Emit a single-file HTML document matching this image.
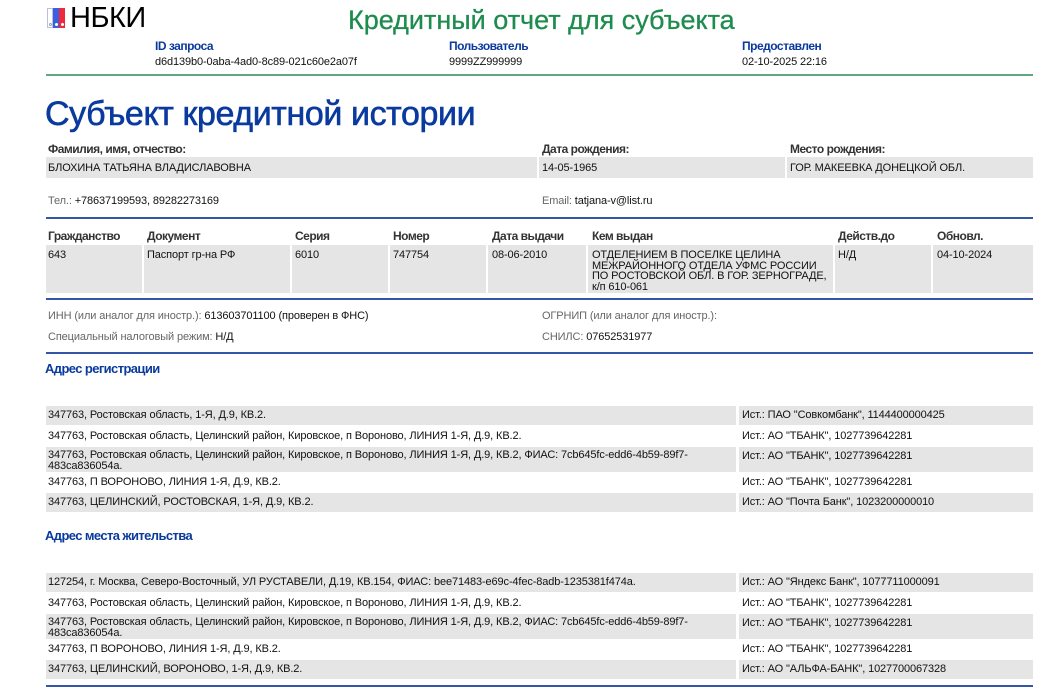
<!DOCTYPE html>
<html><head><meta charset="utf-8"><style>
*{margin:0;padding:0;box-sizing:border-box}
body{width:1059px;height:699px;background:#fff;position:relative;overflow:hidden;font-family:"Liberation Sans",Arial,sans-serif;color:#111}
.a{position:absolute;white-space:nowrap}
.t{font-size:11px;letter-spacing:-0.12px;line-height:11px}
.lb{font-size:12px;font-weight:bold;color:#333;letter-spacing:-0.5px}
.g{position:absolute;background:#e5e5e5}
.gr{color:#666}
.bl{position:absolute;left:46px;width:987px;height:2px;background:#3456a8}
.h2{font-size:13px;font-weight:bold;color:#0a3a9e;letter-spacing:-0.6px}
.ml{font-size:12px;font-weight:bold;color:#0a3a9e;letter-spacing:-0.5px}
</style></head><body>
<div class="a" style="left:47px;top:8px;width:6px;height:20px;border:1px solid #b8c0e0;background:#fff"></div>
<div class="a" style="left:53px;top:8px;width:6px;height:20px;background:#3a5fe0"></div>
<div class="a" style="left:59px;top:8px;width:6px;height:20px;background:#ee2a3a"></div>
<div class="a" style="left:49px;top:23px;width:3px;height:3px;border:1px solid #8aa;border-radius:50%"></div>
<div class="a" style="left:55px;top:23px;width:3px;height:3px;background:#fff;border-radius:50%"></div>
<div class="a" style="left:61px;top:23px;width:3px;height:3px;background:#fff;border-radius:50%"></div>
<div class="a" style="left:70px;top:2px;font-size:29px;color:#000;line-height:32px;letter-spacing:-0.5px">НБКИ</div>
<div class="a" style="left:348px;top:4px;font-size:27px;color:#1e8c4e;line-height:32px;-webkit-text-stroke:0.3px #1e8c4e">Кредитный отчет для субъекта</div>
<div class="a ml" style="left:155px;top:39px">ID запроса</div>
<div class="a t" style="left:155px;top:57px">d6d139b0-0aba-4ad0-8c89-021c60e2a07f</div>
<div class="a ml" style="left:449px;top:39px">Пользователь</div>
<div class="a t" style="left:449px;top:57px">9999ZZ999999</div>
<div class="a ml" style="left:742px;top:39px">Предоставлен</div>
<div class="a t" style="left:742px;top:57px">02-10-2025 22:16</div>
<div class="a" style="left:46px;top:74px;width:987px;height:2px;background:#5fa882"></div>
<div class="a" style="left:45px;top:95px;font-size:34px;color:#0a3a9e;line-height:38px;letter-spacing:-0.4px;-webkit-text-stroke:0.6px #0a3a9e">Субъект кредитной истории</div>
<div class="a lb" style="left:48px;top:142px">Фамилия, имя, отчество:</div>
<div class="a lb" style="left:542px;top:142px">Дата рождения:</div>
<div class="a lb" style="left:790px;top:142px">Место рождения:</div>
<div class="g" style="left:46px;top:157px;width:491px;height:21px"></div>
<div class="g" style="left:539px;top:157px;width:246px;height:21px"></div>
<div class="g" style="left:787px;top:157px;width:246px;height:21px"></div>
<div class="a t" style="left:48px;top:163px">БЛОХИНА ТАТЬЯНА ВЛАДИСЛАВОВНА</div>
<div class="a t" style="left:542px;top:163px">14-05-1965</div>
<div class="a t" style="left:790px;top:163px">ГОР. МАКЕЕВКА ДОНЕЦКОЙ ОБЛ.</div>
<div class="a t" style="left:48px;top:196px"><span class="gr">Тел.:</span> +78637199593, 89282273169</div>
<div class="a t" style="left:542px;top:196px"><span class="gr">Email:</span> tatjana-v@list.ru</div>
<div class="bl" style="top:217px"></div>
<div class="a lb" style="left:48px;top:229px">Гражданство</div>
<div class="a lb" style="left:147px;top:229px">Документ</div>
<div class="a lb" style="left:295px;top:229px">Серия</div>
<div class="a lb" style="left:393px;top:229px">Номер</div>
<div class="a lb" style="left:492px;top:229px">Дата выдачи</div>
<div class="a lb" style="left:592px;top:229px">Кем выдан</div>
<div class="a lb" style="left:838px;top:229px">Действ.до</div>
<div class="a lb" style="left:937px;top:229px">Обновл.</div>
<div class="g" style="left:46px;top:245px;width:96px;height:48px"></div>
<div class="g" style="left:144px;top:245px;width:146px;height:48px"></div>
<div class="g" style="left:292px;top:245px;width:96px;height:48px"></div>
<div class="g" style="left:390px;top:245px;width:96px;height:48px"></div>
<div class="g" style="left:488px;top:245px;width:98px;height:48px"></div>
<div class="g" style="left:588px;top:245px;width:245px;height:48px"></div>
<div class="g" style="left:835px;top:245px;width:96px;height:48px"></div>
<div class="g" style="left:933px;top:245px;width:100px;height:48px"></div>
<div class="a t" style="left:48px;top:250px">643</div>
<div class="a t" style="left:147px;top:250px">Паспорт гр-на РФ</div>
<div class="a t" style="left:295px;top:250px">6010</div>
<div class="a t" style="left:393px;top:250px">747754</div>
<div class="a t" style="left:492px;top:250px">08-06-2010</div>
<div class="a t" style="left:592px;top:250px;line-height:10.5px">ОТДЕЛЕНИЕМ В ПОСЕЛКЕ ЦЕЛИНА<br>МЕЖРАЙОННОГО ОТДЕЛА УФМС РОССИИ<br>ПО РОСТОВСКОЙ ОБЛ. В ГОР. ЗЕРНОГРАДЕ,<br>к/п 610-061</div>
<div class="a t" style="left:838px;top:250px">Н/Д</div>
<div class="a t" style="left:937px;top:250px">04-10-2024</div>
<div class="bl" style="top:298px"></div>
<div class="a t" style="left:48px;top:311px"><span class="gr">ИНН (или аналог для иностр.):</span> 613603701100 (проверен в ФНС)</div>
<div class="a t" style="left:542px;top:311px"><span class="gr">ОГРНИП (или аналог для иностр.):</span></div>
<div class="a t" style="left:48px;top:332px"><span class="gr">Специальный налоговый режим:</span> Н/Д</div>
<div class="a t" style="left:542px;top:332px"><span class="gr">СНИЛС:</span> 07652531977</div>
<div class="bl" style="top:352px"></div>
<div class="a h2" style="left:45px;top:361px">Адрес регистрации</div>
<div class="g" style="left:46px;top:406px;width:690px;height:19px"></div><div class="g" style="left:739px;top:406px;width:294px;height:19px"></div>
<div class="g" style="left:46px;top:447px;width:690px;height:25px"></div><div class="g" style="left:739px;top:447px;width:294px;height:25px"></div>
<div class="g" style="left:46px;top:493px;width:690px;height:19px"></div><div class="g" style="left:739px;top:493px;width:294px;height:19px"></div>
<div class="a t" style="left:48px;top:410px">347763, Ростовская область, 1-Я, Д.9, КВ.2.</div>
<div class="a t" style="left:742px;top:410px">Ист.: ПАО "Совкомбанк", 1144400000425</div>
<div class="a t" style="left:48px;top:431px">347763, Ростовская область, Целинский район, Кировское, п Вороново, ЛИНИЯ 1-Я, Д.9, КВ.2.</div>
<div class="a t" style="left:742px;top:431px">Ист.: АО "ТБАНК", 1027739642281</div>
<div class="a t" style="left:48px;top:450px;line-height:11px">347763, Ростовская область, Целинский район, Кировское, п Вороново, ЛИНИЯ 1-Я, Д.9, КВ.2, ФИАС: 7cb645fc-edd6-4b59-89f7-<br>483ca836054a.</div>
<div class="a t" style="left:742px;top:451px">Ист.: АО "ТБАНК", 1027739642281</div>
<div class="a t" style="left:48px;top:477px">347763, П ВОРОНОВО, ЛИНИЯ 1-Я, Д.9, КВ.2.</div>
<div class="a t" style="left:742px;top:477px">Ист.: АО "ТБАНК", 1027739642281</div>
<div class="a t" style="left:48px;top:497px">347763, ЦЕЛИНСКИЙ, РОСТОВСКАЯ, 1-Я, Д.9, КВ.2.</div>
<div class="a t" style="left:742px;top:497px">Ист.: АО "Почта Банк", 1023200000010</div>
<div class="a h2" style="left:45px;top:528px">Адрес места жительства</div>
<div class="g" style="left:46px;top:573px;width:690px;height:19px"></div><div class="g" style="left:739px;top:573px;width:294px;height:19px"></div>
<div class="g" style="left:46px;top:614px;width:690px;height:25px"></div><div class="g" style="left:739px;top:614px;width:294px;height:25px"></div>
<div class="g" style="left:46px;top:660px;width:690px;height:19px"></div><div class="g" style="left:739px;top:660px;width:294px;height:19px"></div>
<div class="a t" style="left:48px;top:577px">127254, г. Москва, Северо-Восточный, УЛ РУСТАВЕЛИ, Д.19, КВ.154, ФИАС: bee71483-e69c-4fec-8adb-1235381f474a.</div>
<div class="a t" style="left:742px;top:577px">Ист.: АО "Яндекс Банк", 1077711000091</div>
<div class="a t" style="left:48px;top:598px">347763, Ростовская область, Целинский район, Кировское, п Вороново, ЛИНИЯ 1-Я, Д.9, КВ.2.</div>
<div class="a t" style="left:742px;top:598px">Ист.: АО "ТБАНК", 1027739642281</div>
<div class="a t" style="left:48px;top:617px;line-height:11px">347763, Ростовская область, Целинский район, Кировское, п Вороново, ЛИНИЯ 1-Я, Д.9, КВ.2, ФИАС: 7cb645fc-edd6-4b59-89f7-<br>483ca836054a.</div>
<div class="a t" style="left:742px;top:618px">Ист.: АО "ТБАНК", 1027739642281</div>
<div class="a t" style="left:48px;top:644px">347763, П ВОРОНОВО, ЛИНИЯ 1-Я, Д.9, КВ.2.</div>
<div class="a t" style="left:742px;top:644px">Ист.: АО "ТБАНК", 1027739642281</div>
<div class="a t" style="left:48px;top:664px">347763, ЦЕЛИНСКИЙ, ВОРОНОВО, 1-Я, Д.9, КВ.2.</div>
<div class="a t" style="left:742px;top:664px">Ист.: АО "АЛЬФА-БАНК", 1027700067328</div>
<div class="bl" style="top:685px"></div>
</body></html>
